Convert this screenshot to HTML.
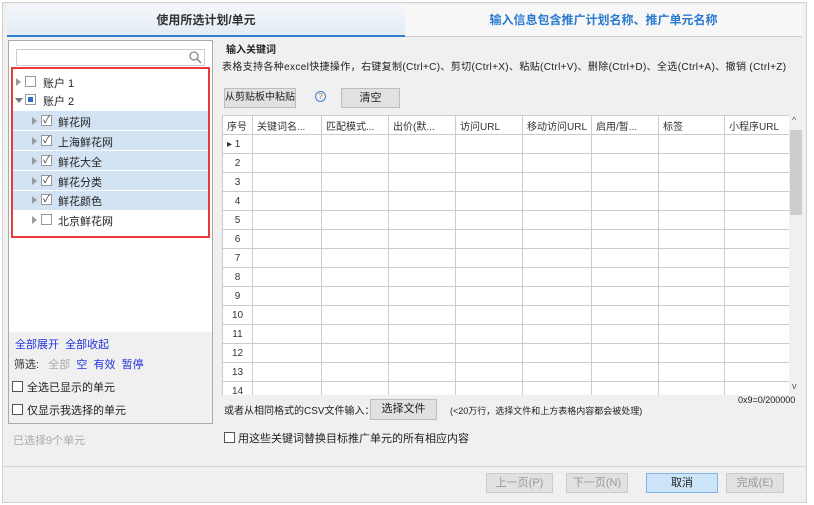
<!DOCTYPE html>
<html><head><meta charset="utf-8"><style>
*{box-sizing:border-box;margin:0;padding:0}
body{width:814px;height:505px;background:#fff;font-family:"Liberation Sans","Noto Sans CJK SC",sans-serif;font-size:11px;color:#222;position:relative;overflow:hidden}
.a{position:absolute;white-space:nowrap}
.btn{position:absolute;background:#e1e1e1;border:1px solid #bdbdbd;text-align:center;font-size:11px;white-space:nowrap;overflow:hidden}
.cb{position:absolute;width:11px;height:11px;border:1px solid #555;background:#fff}
.tcb{position:absolute;width:11px;height:11px;border:1px solid #999;background:#fff;font-size:10px;line-height:9px;text-align:center;color:#333}
.tri{position:absolute;width:0;height:0;border-top:4px solid transparent;border-bottom:4px solid transparent;border-left:5px solid #999}
table{border-collapse:collapse;position:absolute;left:222px;top:115px;background:#fff;table-layout:fixed}
td{border:1px solid #ccc;height:19px;padding:0 4px;font-size:10px;white-space:nowrap;overflow:hidden;color:#333}
</style></head><body>
<div class="a" style="left:2px;top:2px;width:805px;height:501px;background:#f0f0f0;border:1px solid #d0d0d0"></div>
<div class="a" style="left:7px;top:5px;width:398px;height:32px;background:linear-gradient(#f4f7fb,#e3ebf4);border-bottom:2px solid #2f7fd0;text-align:center;line-height:30px;font-size:12px;font-weight:bold;color:#333">使用所选计划/单元</div>
<div class="a" style="left:405px;top:5px;width:397px;height:32px;background:#f7f7f7;border-bottom:1px solid #ccc;text-align:center;line-height:30px;font-size:12px;font-weight:bold;color:#2a7ad0">输入信息包含推广计划名称、推广单元名称</div>
<div class="a" style="left:8px;top:40px;width:205px;height:384px;border:1px solid #aaa;background:#f0f0f0"></div>
<div class="a" style="left:9px;top:41px;width:203px;height:291px;background:#fff"></div>
<div class="a" style="left:16px;top:49px;width:189px;height:17px;border:1px solid #ccc;background:#fff"></div>
<svg class="a" style="left:189px;top:51px" width="13" height="13"><circle cx="5" cy="5" r="4" fill="none" stroke="#888" stroke-width="1.3"/><line x1="8" y1="8" x2="12" y2="12" stroke="#888" stroke-width="1.5"/></svg>
<div class="a" style="left:11px;top:111px;width:198px;height:99px;background:#d3e3f3"></div>
<div class="a" style="left:11px;top:130px;width:198px;height:1px;background:#fff"></div>
<div class="a" style="left:11px;top:150px;width:198px;height:1px;background:#fff"></div>
<div class="a" style="left:11px;top:170px;width:198px;height:1px;background:#fff"></div>
<div class="a" style="left:11px;top:190px;width:198px;height:1px;background:#fff"></div>
<div class="a" style="left:11px;top:67px;width:199px;height:171px;border:2px solid #e83a3a"></div>
<div class="tri" style="left:16px;top:78px"></div><div class="tcb" style="left:25px;top:76px"></div><div class="a" style="left:43px;top:75px">账户 1</div>
<div class="a" style="left:15px;top:98px;border-left:4px solid transparent;border-right:4px solid transparent;border-top:5px solid #777"></div><div class="tcb" style="left:25px;top:94px;padding:2px"><div style="background:#2a6fc0;width:100%;height:100%"></div></div><div class="a" style="left:43px;top:93px">账户 2</div>
<div class="tri" style="left:32px;top:117px"></div><div class="tcb" style="left:41px;top:115px">✓</div><div class="a" style="left:58px;top:114px">鲜花网</div>
<div class="tri" style="left:32px;top:137px"></div><div class="tcb" style="left:41px;top:135px">✓</div><div class="a" style="left:58px;top:134px">上海鲜花网</div>
<div class="tri" style="left:32px;top:157px"></div><div class="tcb" style="left:41px;top:155px">✓</div><div class="a" style="left:58px;top:154px">鲜花大全</div>
<div class="tri" style="left:32px;top:177px"></div><div class="tcb" style="left:41px;top:175px">✓</div><div class="a" style="left:58px;top:174px">鲜花分类</div>
<div class="tri" style="left:32px;top:196px"></div><div class="tcb" style="left:41px;top:194px">✓</div><div class="a" style="left:58px;top:193px">鲜花颜色</div>
<div class="tri" style="left:32px;top:216px"></div><div class="tcb" style="left:41px;top:214px"></div><div class="a" style="left:58px;top:213px">北京鲜花网</div>
<div class="a" style="left:15px;top:336px;color:#2233dd">全部展开 &nbsp;全部收起</div>
<div class="a" style="left:14px;top:356px;color:#333">筛选: &nbsp;&nbsp;<span style="color:#aaa">全部</span> &nbsp;<span style="color:#2233dd">空 &nbsp;有效 &nbsp;暂停</span></div>
<div class="cb" style="left:12px;top:381px"></div><div class="a" style="left:27px;top:379px">全选已显示的单元</div>
<div class="cb" style="left:12px;top:404px"></div><div class="a" style="left:27px;top:402px">仅显示我选择的单元</div>
<div class="a" style="left:13px;top:432px;color:#aaa">已选择9个单元</div>
<div class="a" style="left:226px;top:41px;font-weight:bold;font-size:10px">输入关键词</div>
<div class="a" style="left:222px;top:58px;font-size:10px;letter-spacing:0.35px">表格支持各种excel快捷操作，右键复制(Ctrl+C)、剪切(Ctrl+X)、粘贴(Ctrl+V)、删除(Ctrl+D)、全选(Ctrl+A)、撤销 (Ctrl+Z)</div>
<div class="btn" style="left:224px;top:88px;width:72px;height:20px;line-height:18px;font-size:10px">从剪贴板中粘贴</div>
<div class="a" style="left:315px;top:91px;width:11px;height:11px;border-radius:50%;border:1px solid #4a7fd0;background:#e8eefc;font-size:8px;line-height:9px;text-align:center;color:#c80">?</div>
<div class="btn" style="left:341px;top:88px;width:59px;height:20px;line-height:18px">清空</div>
<table>
<colgroup><col style="width:30px"><col style="width:69px"><col style="width:67px"><col style="width:67px"><col style="width:67px"><col style="width:66px"><col style="width:67px"><col style="width:66px"><col style="width:67px"></colgroup>
<tr><td>序号</td><td>关键词名...</td><td>匹配模式...</td><td>出价(默...</td><td>访问URL</td><td>移动访问URL</td><td>启用/暂...</td><td>标签</td><td>小程序URL</td></tr>
<tr><td>▸ 1</td><td></td><td></td><td></td><td></td><td></td><td></td><td></td><td></td></tr>
<tr><td style="text-align:center">2</td><td></td><td></td><td></td><td></td><td></td><td></td><td></td><td></td></tr>
<tr><td style="text-align:center">3</td><td></td><td></td><td></td><td></td><td></td><td></td><td></td><td></td></tr>
<tr><td style="text-align:center">4</td><td></td><td></td><td></td><td></td><td></td><td></td><td></td><td></td></tr>
<tr><td style="text-align:center">5</td><td></td><td></td><td></td><td></td><td></td><td></td><td></td><td></td></tr>
<tr><td style="text-align:center">6</td><td></td><td></td><td></td><td></td><td></td><td></td><td></td><td></td></tr>
<tr><td style="text-align:center">7</td><td></td><td></td><td></td><td></td><td></td><td></td><td></td><td></td></tr>
<tr><td style="text-align:center">8</td><td></td><td></td><td></td><td></td><td></td><td></td><td></td><td></td></tr>
<tr><td style="text-align:center">9</td><td></td><td></td><td></td><td></td><td></td><td></td><td></td><td></td></tr>
<tr><td style="text-align:center">10</td><td></td><td></td><td></td><td></td><td></td><td></td><td></td><td></td></tr>
<tr><td style="text-align:center">11</td><td></td><td></td><td></td><td></td><td></td><td></td><td></td><td></td></tr>
<tr><td style="text-align:center">12</td><td></td><td></td><td></td><td></td><td></td><td></td><td></td><td></td></tr>
<tr><td style="text-align:center">13</td><td></td><td></td><td></td><td></td><td></td><td></td><td></td><td></td></tr>
<tr><td style="text-align:center">14</td><td></td><td></td><td></td><td></td><td></td><td></td><td></td><td></td></tr>
</table>
<div class="a" style="left:214px;top:395px;width:590px;height:20px;background:#f0f0f0"></div>
<div class="a" style="left:789px;top:115px;width:14px;height:280px;background:#f0f0f0"></div>
<div class="a" style="left:790px;top:130px;width:12px;height:85px;background:#cdcdcd"></div>
<div class="a" style="left:792px;top:115px;font-size:9px;color:#555">^</div>
<div class="a" style="left:792px;top:381px;font-size:9px;color:#555">v</div>
<div class="a" style="left:738px;top:395px;font-size:9px">0x9=0/200000</div>
<div class="a" style="left:224px;top:402px;font-size:10px">或者从相同格式的CSV文件输入：</div>
<div class="btn" style="left:370px;top:399px;width:67px;height:21px;line-height:19px">选择文件</div>
<div class="a" style="left:450px;top:404px;font-size:9px">(&lt;20万行，选择文件和上方表格内容都会被处理)</div>
<div class="cb" style="left:224px;top:432px"></div><div class="a" style="left:238px;top:430px">用这些关键词替换目标推广单元的所有相应内容</div>
<div class="a" style="left:3px;top:466px;width:803px;height:1px;background:#d5d5d5"></div>
<div class="btn" style="left:486px;top:473px;width:67px;height:20px;line-height:18px;color:#999;border-color:#ccc">上一页(P)</div>
<div class="btn" style="left:566px;top:473px;width:62px;height:20px;line-height:18px;color:#999;border-color:#ccc">下一页(N)</div>
<div class="btn" style="left:646px;top:473px;width:72px;height:20px;line-height:18px;background:#cce4f7;border-color:#7eb4ea">取消</div>
<div class="btn" style="left:726px;top:473px;width:58px;height:20px;line-height:18px;color:#999;border-color:#ccc">完成(E)</div>
</body></html>
